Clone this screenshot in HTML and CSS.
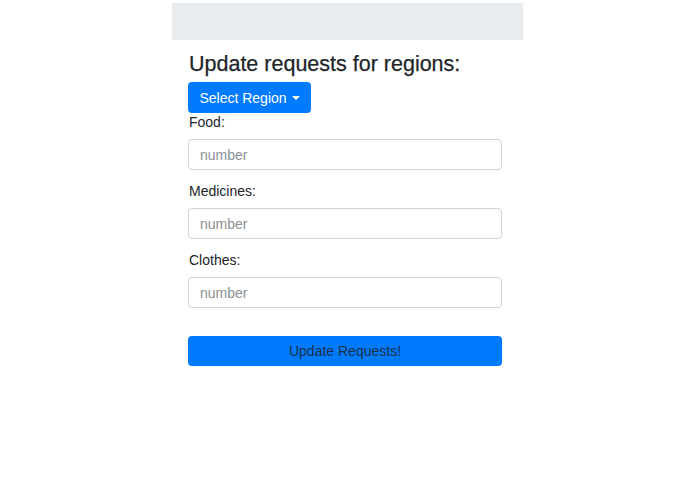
FILE: index.html
```html
<!DOCTYPE html>
<html lang="en">
<head>
<meta charset="utf-8">
<title>Update requests</title>
<link rel="stylesheet" href="styles.css">
</head>
<body>
<div class="page">
  <div class="topbar"></div>
  <div class="content">
    <h4 class="title">Update requests for regions:</h4>
    <button class="btn btn-primary dropdown-toggle" type="button">Select Region<span class="caret"></span></button>
    <div class="group">
      <label class="label" for="food">Food:</label>
      <input class="input" id="food" type="text" placeholder="number">
    </div>
    <div class="group">
      <label class="label" for="med">Medicines:</label>
      <input class="input" id="med" type="text" placeholder="number">
    </div>
    <div class="group">
      <label class="label" for="clo">Clothes:</label>
      <input class="input" id="clo" type="text" placeholder="number">
    </div>
    <button class="btn btn-submit" type="button">Update Requests!</button>
  </div>
</div>
</body>
</html>
```
FILE: styles.css
```css
html, body {
  margin: 0;
  padding: 0;
  background: #ffffff;
}
body {
  font-family: "Liberation Sans", Arial, Helvetica, sans-serif;
  color: #212529;
  font-size: 14px;
}
.page {
  width: 351px;
  margin: 0 auto;
}
.topbar {
  margin-top: 3px;
  height: 37px;
  background: #e9ecef;
}
.content {
  padding: 0 16px;
  display: flex;
  flex-direction: column;
  align-items: flex-start;
}
.title {
  margin: 12px 0 6px 1px;
  font-size: 21.5px;
  line-height: 24px;
  font-weight: 400;
  color: #212529;
  -webkit-text-stroke: 0.25px #212529;
}
.btn {
  font-family: "Liberation Sans", Arial, Helvetica, sans-serif;
  border: 0;
  border-radius: 4px;
  background: #007bff;
  font-size: 14px;
  cursor: pointer;
}
.dropdown-toggle {
  height: 31px;
  width: 123px;
  color: #ffffff;
  padding: 0;
  display: flex;
  align-items: center;
  justify-content: center;
  gap: 5px;
}
.caret {
  width: 0;
  height: 0;
  border-top: 4px solid #ffffff;
  border-left: 4px solid transparent;
  border-right: 4px solid transparent;
  margin-top: 1px;
}
.group {
  display: flex;
  flex-direction: column;
  margin-bottom: 12px;
}
.label {
  line-height: 19px;
  margin: 0 0 7px 1px;
  font-size: 14px;
  color: #212529;
}
.input {
  box-sizing: border-box;
  width: 314px;
  height: 31px;
  border: 1px solid #ced4da;
  border-radius: 4px;
  padding: 0 11px;
  font-family: "Liberation Sans", Arial, Helvetica, sans-serif;
  font-size: 14px;
  color: #495057;
  margin: 0;
}
.input::placeholder {
  color: #8a9096;
}
.btn-submit {
  margin-top: 16px;
  width: 314px;
  height: 30px;
  color: #1c3048;
}
```
